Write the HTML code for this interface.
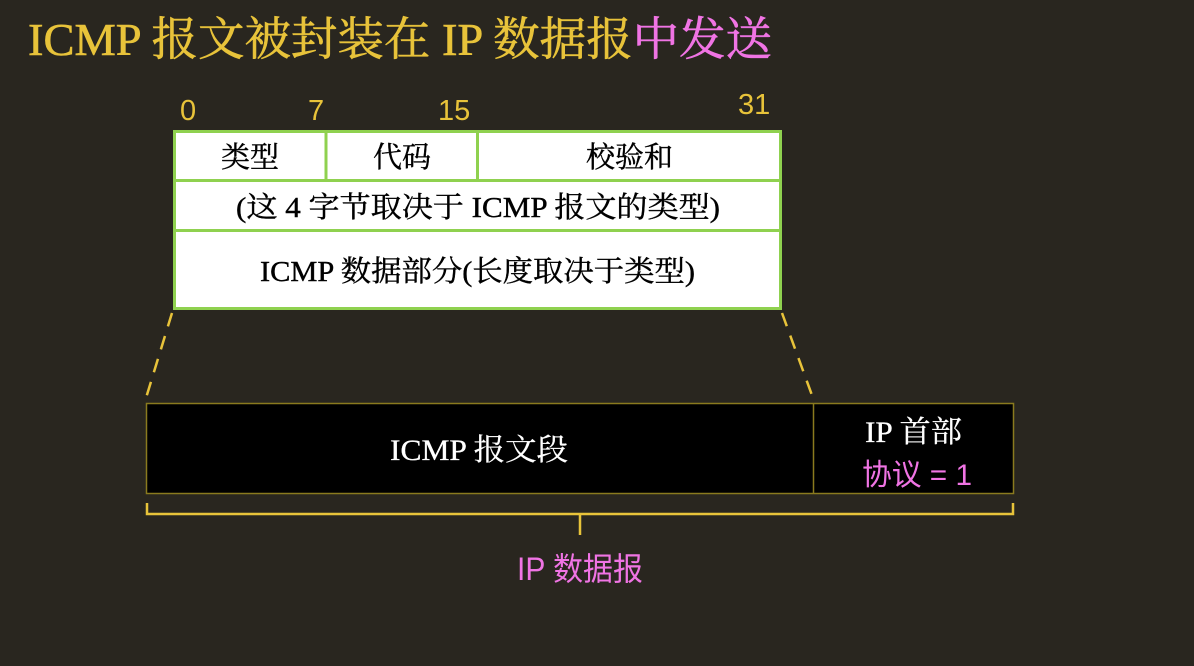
<!DOCTYPE html>
<html><head><meta charset="utf-8"><style>
html,body{margin:0;padding:0;background:#29261f;}
body{width:1194px;height:666px;overflow:hidden;position:relative;}
svg{position:absolute;left:0;top:0;}
.serif{font-family:"Liberation Serif","Noto Serif CJK SC",serif;}
.sans{font-family:"Liberation Sans","Noto Sans CJK SC",sans-serif;}
</style></head><body>
<svg width="1194" height="666" viewBox="0 0 1194 666">
<text x="28" y="55" class="serif" font-size="46" fill="#e8c33a" stroke="#e8c33a" stroke-width="0.6" textLength="744" lengthAdjust="spacingAndGlyphs">ICMP 报文被封装在 IP 数据报<tspan fill="#f074e4" stroke="#f074e4">中发送</tspan></text>
<g class="sans" font-size="29" fill="#e8c33a">
<text x="180" y="120">0</text>
<text x="308" y="120">7</text>
<text x="438" y="120">15</text>
<text x="738" y="114">31</text>
</g>
<rect x="174.5" y="131.5" width="606" height="177" fill="#fff" stroke="#8fd14f" stroke-width="3"/>
<line x1="174" y1="180.5" x2="781" y2="180.5" stroke="#8fd14f" stroke-width="3"/>
<line x1="174" y1="230.5" x2="781" y2="230.5" stroke="#8fd14f" stroke-width="3"/>
<line x1="326" y1="131" x2="326" y2="181" stroke="#8fd14f" stroke-width="3"/>
<line x1="477.5" y1="131" x2="477.5" y2="181" stroke="#8fd14f" stroke-width="3"/>
<g class="serif" font-size="29" fill="#000" stroke="#000" stroke-width="0.4">
<text x="221" y="167" textLength="58" lengthAdjust="spacingAndGlyphs">类型</text>
<text x="373" y="167" textLength="58" lengthAdjust="spacingAndGlyphs">代码</text>
<text x="586" y="167" textLength="87" lengthAdjust="spacingAndGlyphs">校验和</text>
<text x="236" y="217" textLength="484" lengthAdjust="spacingAndGlyphs">(这 4 字节取决于 ICMP 报文的类型)</text>
<text x="260" y="281" textLength="435" lengthAdjust="spacingAndGlyphs">ICMP 数据部分(长度取决于类型)</text>
</g>
<line x1="172" y1="313" x2="146" y2="398" stroke="#e8c33a" stroke-width="2.5" stroke-dasharray="14,10"/>
<line x1="782" y1="313" x2="813" y2="398" stroke="#e8c33a" stroke-width="2.5" stroke-dasharray="14,10"/>
<rect x="146.5" y="403.5" width="867" height="90" fill="#000" stroke="#8a7a1e" stroke-width="1.5"/>
<line x1="813.5" y1="403" x2="813.5" y2="494" stroke="#8a7a1e" stroke-width="1.5"/>
<text x="390" y="460" class="serif" font-size="30" fill="#fff" stroke="#fff" stroke-width="0.3" textLength="178" lengthAdjust="spacingAndGlyphs">ICMP 报文段</text>
<text x="865" y="442" class="serif" font-size="30" fill="#fff" stroke="#fff" stroke-width="0.3" textLength="97" lengthAdjust="spacingAndGlyphs">IP 首部</text>
<text x="862" y="485" class="sans" font-size="30" fill="#f074e4" textLength="110" lengthAdjust="spacingAndGlyphs">协议 = 1</text>
<path d="M147 503 V514 H1013 V503 M580 514 V535" fill="none" stroke="#e8c33a" stroke-width="2.5"/>
<text x="517" y="580" class="sans" font-size="32" fill="#f074e4" textLength="126" lengthAdjust="spacingAndGlyphs">IP 数据报</text>
</svg>
</body></html>
